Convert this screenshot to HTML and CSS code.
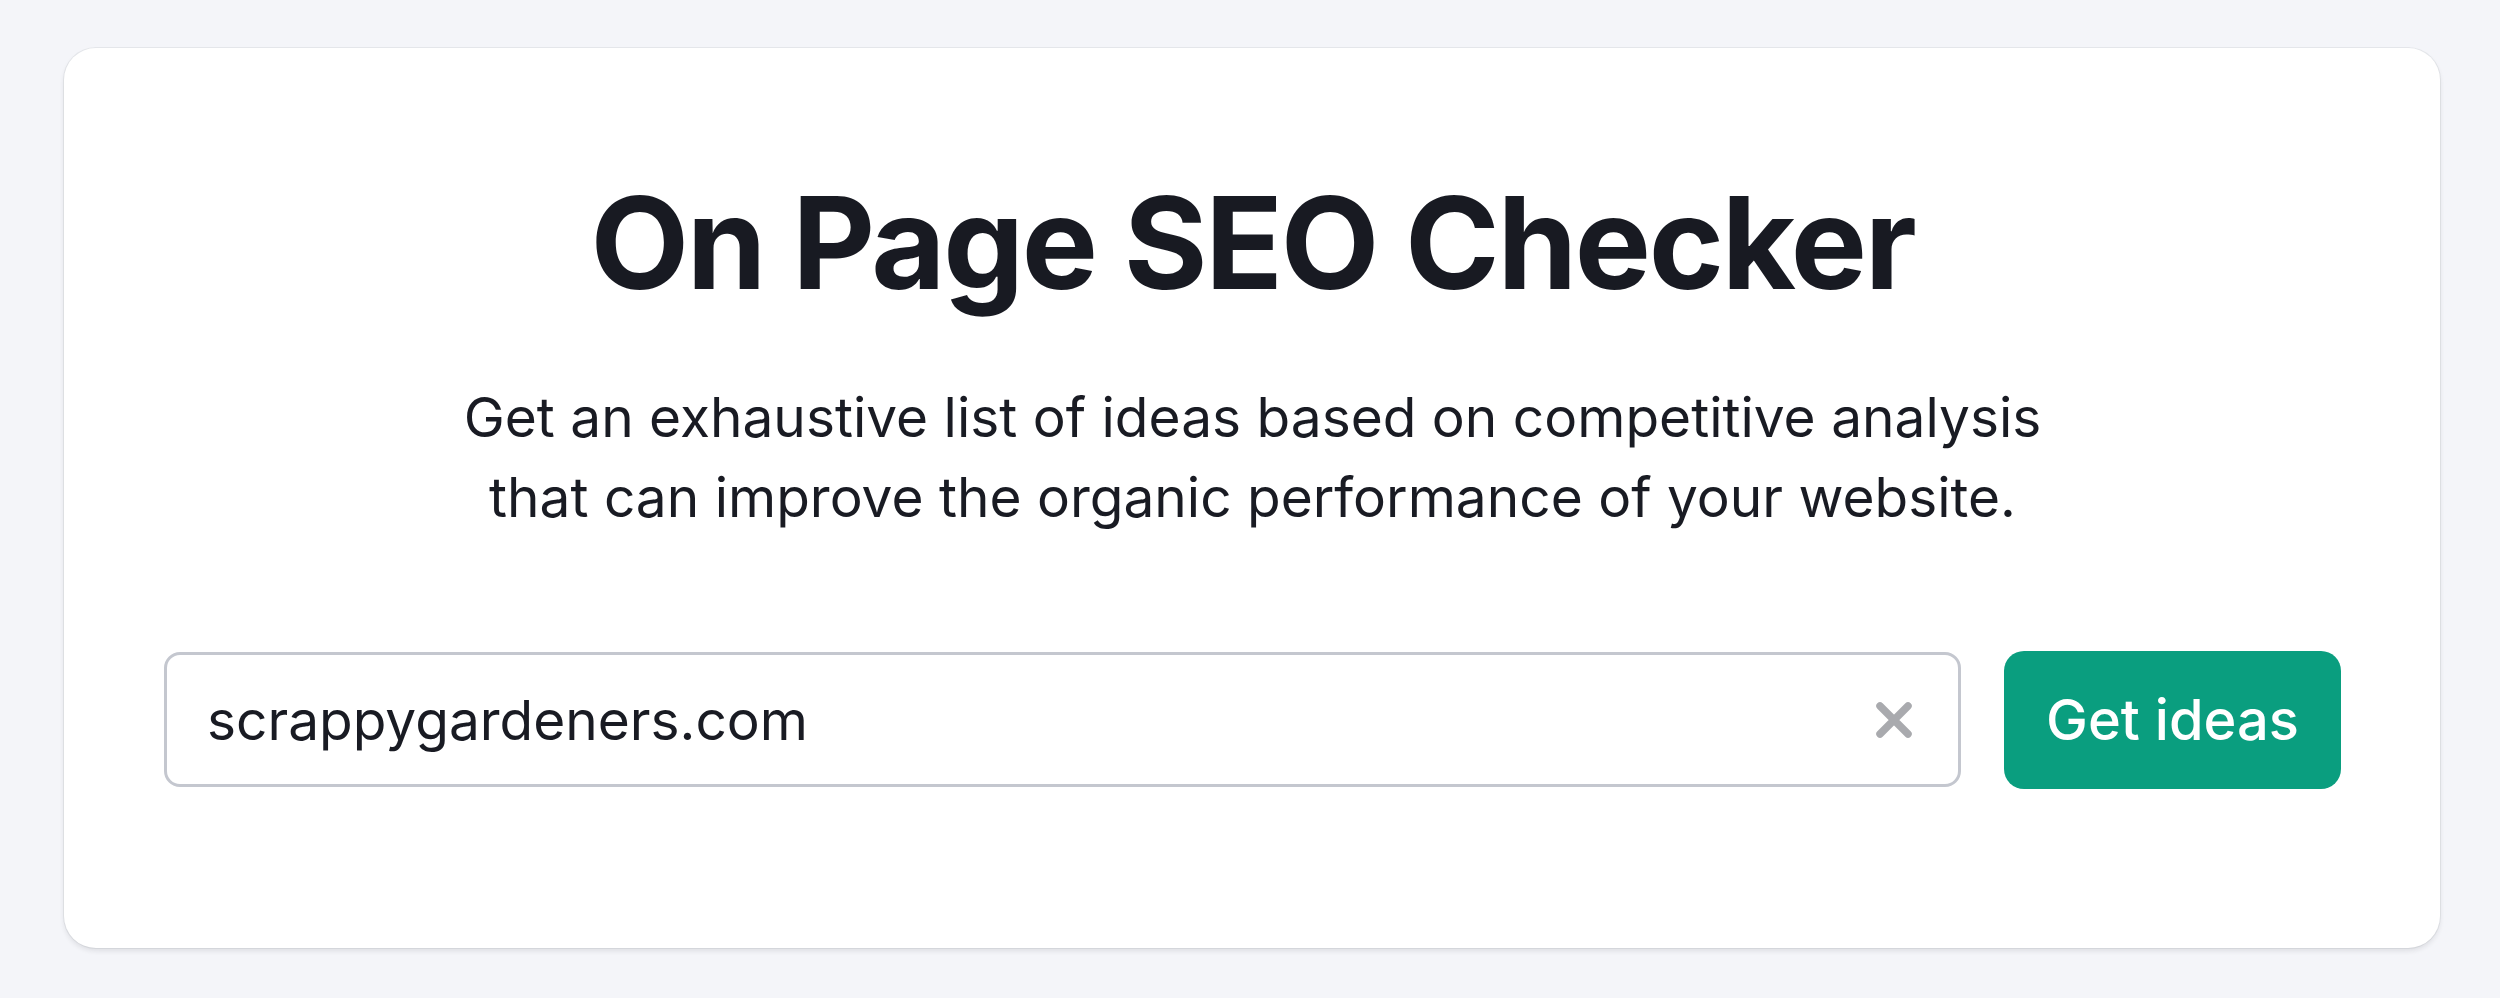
FILE: index.html
```html
<!DOCTYPE html>
<html lang="en">
<head>
<meta charset="utf-8">
<title>On Page SEO Checker</title>
<link rel="stylesheet" href="styles.css">
</head>
<body>
<main class="card">
  <h1 class="title">On Page SEO Checker</h1>
  <p class="subtitle">Get an exhaustive list of ideas based on competitive analysis<br>that can improve the organic performance of your website.</p>
  <form class="search" onsubmit="return false">
    <div class="field">
      <input class="field-input" type="text" value="scrappygardeners.com" aria-label="Domain">
      <button class="clear" type="button" aria-label="Clear">
        <svg width="36" height="36" viewBox="0 0 36 36" aria-hidden="true"><path d="M4 4 L32 32 M32 4 L4 32" stroke="#a9aaae" stroke-width="7.5" stroke-linecap="round" fill="none"/></svg>
      </button>
    </div>
    <button class="submit" type="submit">Get ideas</button>
  </form>
</main>
</body>
</html>
```

FILE: styles.css
```css
* { box-sizing: border-box; }
html, body { margin: 0; }
body {
  background: #f4f5f9;
  padding: 48px 60px 50px 64px;
  font-family: Inter, "Noto Sans", "Liberation Sans", sans-serif;
  color: #191b23;
}
.card {
  background: #ffffff;
  border-radius: 32px;
  box-shadow: 0 0 0 1px rgba(25, 27, 35, 0.06), 0 3px 5px rgba(25, 27, 35, 0.1);
  padding: 118px 99px 159px 100px;
  height: 900px;
  display: flex;
  flex-direction: column;
  align-items: center;
}
.title {
  margin: 0;
  font-size: 128px;
  line-height: 153.6px;
  font-weight: 700;
  color: #181a22;
  letter-spacing: -2.3px;
  text-align: center;
}
.subtitle {
  margin: 57px 0 0;
  font-size: 55px;
  line-height: 80px;
  font-weight: 400;
  text-align: center;
  color: #191b23;
}
.search {
  margin-top: 114px;
  width: 100%;
  display: flex;
  align-items: center;
  gap: 43px;
}
.field {
  flex: 1;
  height: 135px;
  border: 3px solid #c4c7cf;
  border-radius: 16px;
  display: flex;
  align-items: center;
  padding: 0 46px 0 40px;
  background: #fff;
}
.field-input {
  flex: 1;
  border: 0;
  outline: none;
  background: transparent;
  font-family: inherit;
  font-size: 55px;
  color: #191b23;
  padding: 0;
  min-width: 0;
}
.clear {
  border: 0;
  background: transparent;
  padding: 0;
  width: 36px;
  height: 36px;
  display: flex;
}
.submit {
  width: 337px;
  height: 138px;
  border: 0;
  border-radius: 20px;
  background: #0a9e7f;
  color: #ffffff;
  font-family: inherit;
  font-size: 56px;
  font-weight: 500;
}
```
